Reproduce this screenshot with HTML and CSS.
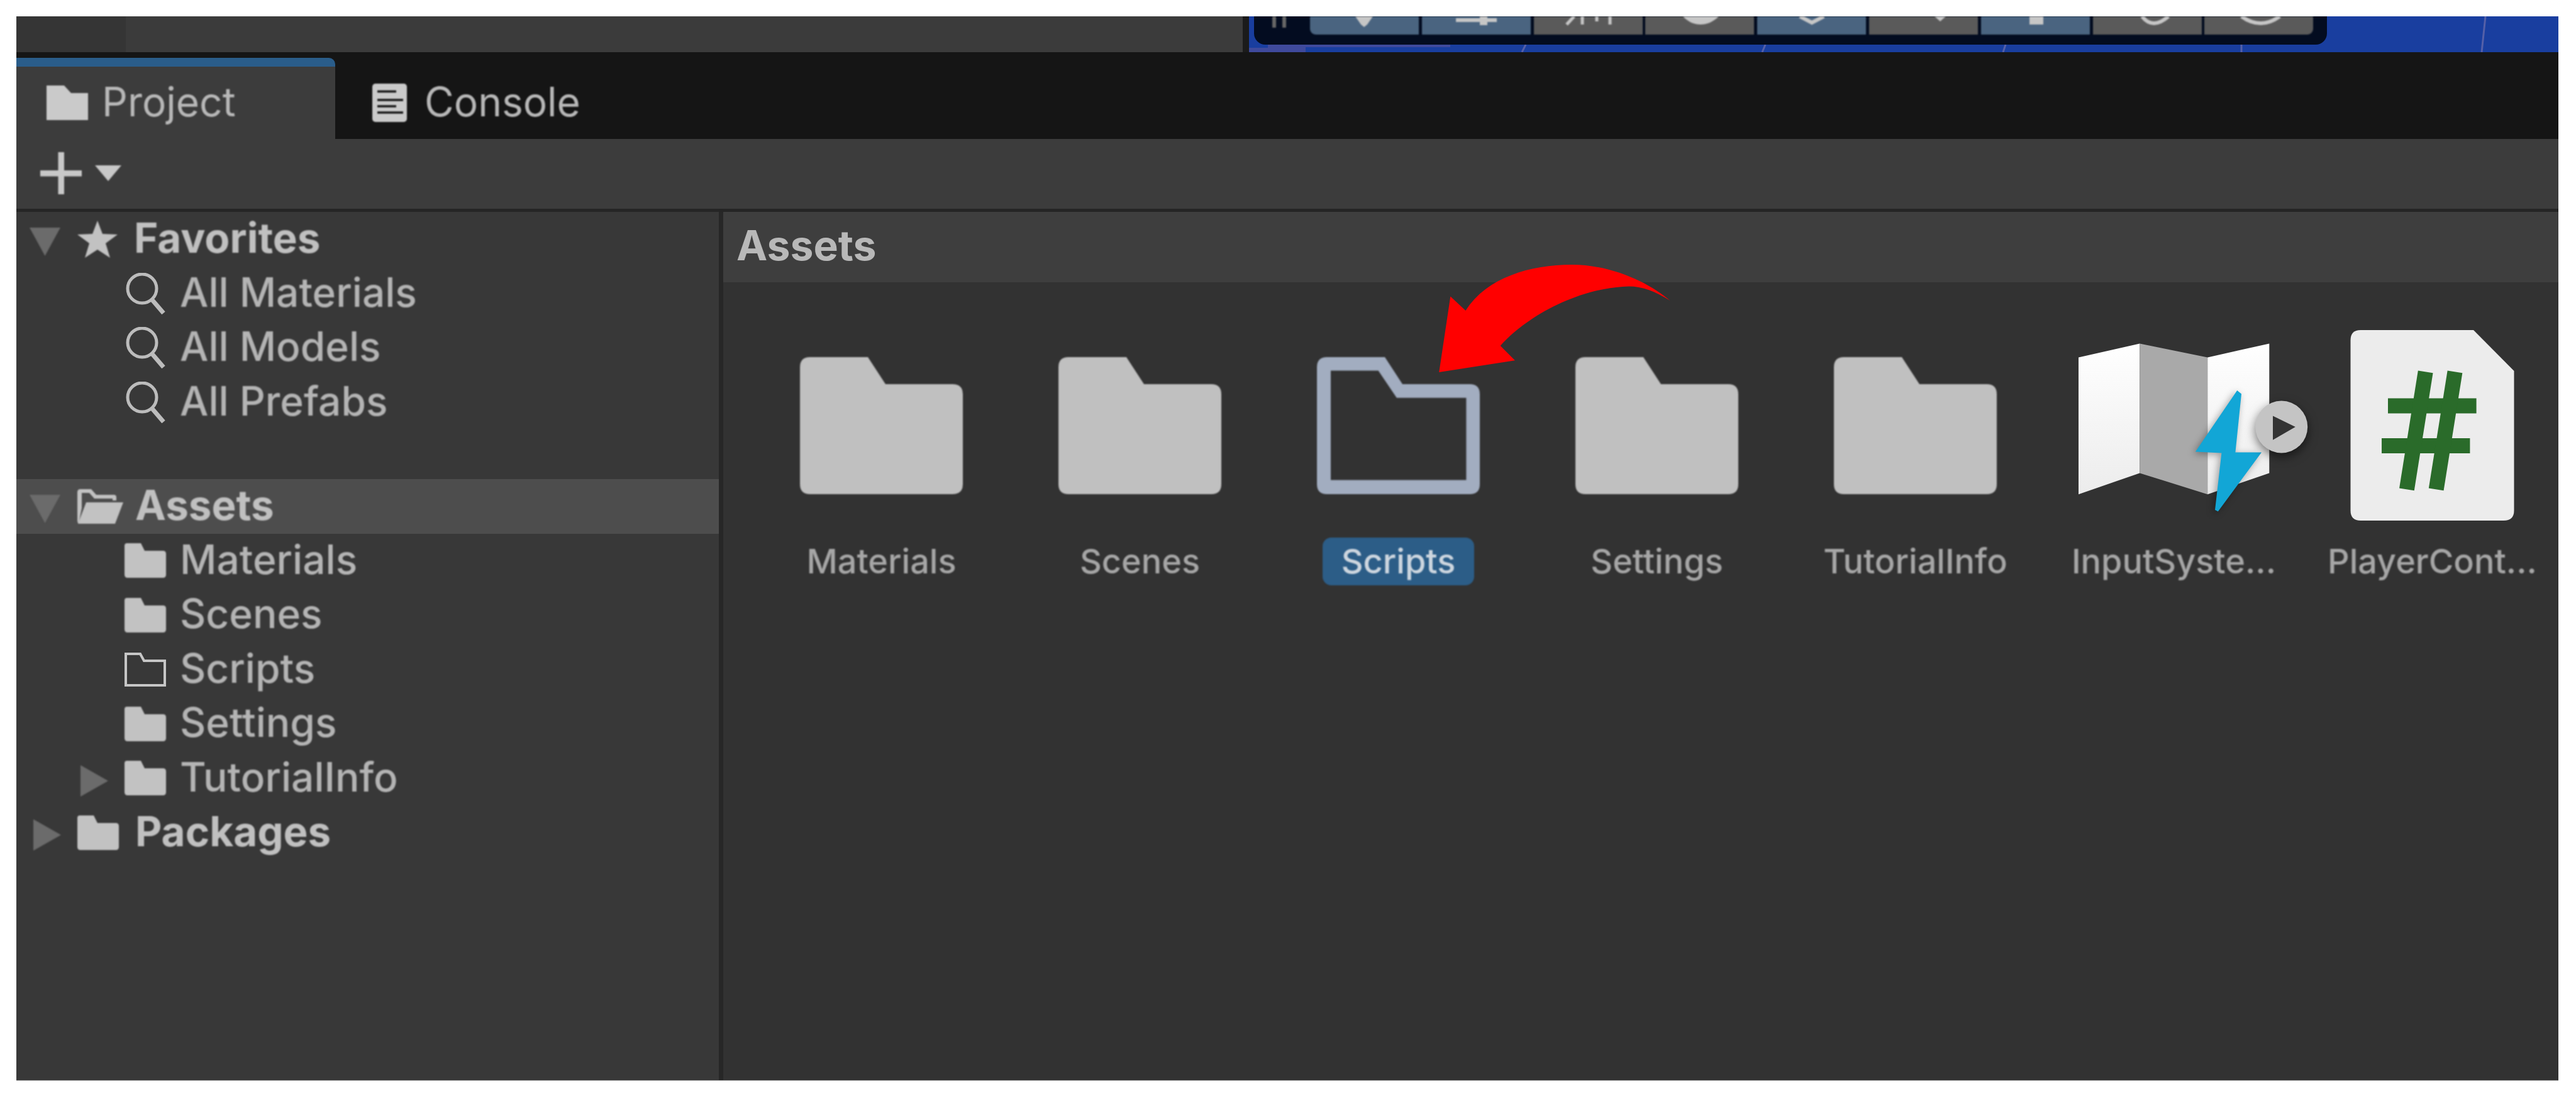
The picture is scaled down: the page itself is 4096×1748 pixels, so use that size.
FILE: index.html
```html
<!DOCTYPE html>
<html lang="en">
<head>
<meta charset="utf-8">
<title>Project</title>
<link rel="stylesheet" href="styles.css">
</head>
<body>
<svg class="defs" aria-hidden="true">
  <symbol id="folder-small" viewBox="0 0 66 55"><path d="M4 0H26L32 12H61Q66 12 66 17V50Q66 55 61 55H5Q0 55 0 50V4Q0 0 4 0Z"/></symbol>
  <symbol id="folder-large" viewBox="0 0 303 303"><path d="M38 43H130L158 86H265Q281 86 281 102V245Q281 261 265 261H38Q22 261 22 245V59Q22 43 38 43Z"/></symbol>
</svg>
<main class="window">
  <div class="strip">
    <div class="strip-dark"></div>
    <div class="strip-mid"></div>
    <div class="strip-rule"></div>
    <div class="scene">
      <svg class="scene-marks" viewBox="0 0 2082 57" width="2082" height="57">
        <path class="mark-band" d="M30 44H320V49H90V57H0V50H30Z"/>
        <path class="mark" d="M434 57L440 45M816 57L821 45M1199 57L1203 45M1578 57L1578 45M1960 57L1966 0"/>
      </svg>
      <div class="overlay">
        <div class="pause"><span class="pause-bar"></span><span class="pause-bar"></span></div>
        <div class="tool blue"><svg viewBox="0 0 173 29" width="173" height="29"><path class="glyph" d="M72 0H100L91 13L86 17L81 13Z"/></svg></div>
        <div class="tool blue"><svg viewBox="0 0 173 29" width="173" height="29"><path class="glyph" d="M54 3H92V0H104V3H119V9H104V14H92V9H54Z"/></svg></div>
        <div class="tool gray"><svg viewBox="0 0 173 29" width="173" height="29"><path class="line thin" d="M64 0L52 13M77 0V13M100 0V8M121 0V13"/></svg></div>
        <div class="tool gray"><svg viewBox="0 0 173 29" width="173" height="29"><path class="glyph" d="M60 0H117C108 9 98 13 88 13C78 13 68 9 60 0Z"/></svg></div>
        <div class="tool blue"><svg viewBox="0 0 173 29" width="173" height="29"><path class="line" d="M68 0L87 10L106 0"/></svg></div>
        <div class="tool gray"><svg viewBox="0 0 173 29" width="173" height="29"><path class="glyph" d="M104 0H122L113 8Z"/></svg></div>
        <div class="tool blue"><svg viewBox="0 0 173 29" width="173" height="29"><path class="glyph" d="M77 0H99V13H77Z"/></svg></div>
        <div class="tool gray"><svg viewBox="0 0 173 29" width="173" height="29"><path class="line" d="M78 0C84 8 90 11 97 11C104 11 112 7 120 0"/></svg></div>
        <div class="tool gray"><svg viewBox="0 0 173 29" width="173" height="29"><path class="line" d="M59 0C70 8 80 11 90 11C100 11 110 7 120 0"/></svg></div>
      </div>
    </div>
  </div>

  <div class="tabbar">
    <div class="tab active">
      <svg class="tab-icon" viewBox="0 0 66 55" width="66" height="55"><path d="M0 0H28L39 12H66V55H0Z"/></svg>
      <span class="tab-label">Project</span>
    </div>
    <div class="tab">
      <svg class="tab-icon" viewBox="0 0 55 61" width="55" height="61">
        <rect width="55" height="61" rx="5"/>
        <path class="console-lines" d="M8 12.5H38M8 26H49M8 36H38M8 46H49"/>
      </svg>
      <span class="tab-label">Console</span>
    </div>
  </div>

  <div class="toolbar">
    <svg class="soft" viewBox="0 0 66 67" width="66" height="67"><path class="add" d="M28.500 0H38V29H66V38.500H38V67H28.500V38.500H0V29H28.500Z"/></svg>
    <svg class="soft" viewBox="0 0 42 25" width="42" height="25"><path class="add" d="M0 0H42L21 25Z"/></svg>
  </div>

  <div class="panes">
    <nav class="tree">
      <div class="row top">
        <span class="slot"><svg class="arrow-down" viewBox="0 0 49 45" width="49" height="45"><path d="M0 0H49L24.5 45Z"/></svg></span>
        <svg class="tree-icon" viewBox="0 0 64 59" width="64" height="59"><path d="M32 0L40 21L64 22L45 36L52 59L32 46L12 59L19 36L0 22L24 21Z"/></svg>
        <span class="row-label strong">Favorites</span>
      </div>
      <div class="row child">
        <span class="slot"></span>
        <svg class="search-icon" viewBox="0 0 67 66" width="67" height="66"><circle cx="28" cy="25" r="23"/><path d="M44 43L62 64"/></svg>
        <span class="row-label">All Materials</span>
      </div>
      <div class="row child">
        <span class="slot"></span>
        <svg class="search-icon" viewBox="0 0 67 66" width="67" height="66"><circle cx="28" cy="25" r="23"/><path d="M44 43L62 64"/></svg>
        <span class="row-label">All Models</span>
      </div>
      <div class="row child">
        <span class="slot"></span>
        <svg class="search-icon" viewBox="0 0 67 66" width="67" height="66"><circle cx="28" cy="25" r="23"/><path d="M44 43L62 64"/></svg>
        <span class="row-label">All Prefabs</span>
      </div>
      <div class="tree-gap"></div>
      <div class="row top current">
        <span class="slot"><svg class="arrow-down" viewBox="0 0 49 45" width="49" height="45"><path d="M0 0H49L24.5 45Z"/></svg></span>
        <svg class="tree-icon" viewBox="0 0 73 55" width="73" height="55"><path d="M5 0H22L30 9H58Q62 9 62 13V18H56V15H27L19 6H7V30L2 55H4Q0 55 0 50V5Q0 0 5 0Z"/><path d="M14 21H73L60 55H1Z"/></svg>
        <span class="row-label strong">Assets</span>
      </div>
      <div class="row child">
        <span class="slot"></span>
        <svg class="tree-icon" width="66" height="55"><use href="#folder-small"/></svg>
        <span class="row-label">Materials</span>
      </div>
      <div class="row child">
        <span class="slot"></span>
        <svg class="tree-icon" width="66" height="55"><use href="#folder-small"/></svg>
        <span class="row-label">Scenes</span>
      </div>
      <div class="row child">
        <span class="slot"></span>
        <svg class="tree-outline" viewBox="0 0 66 55" width="66" height="55"><path d="M2 3H25L31 14H64V53H2Z"/></svg>
        <span class="row-label">Scripts</span>
      </div>
      <div class="row child">
        <span class="slot"></span>
        <svg class="tree-icon" width="66" height="55"><use href="#folder-small"/></svg>
        <span class="row-label">Settings</span>
      </div>
      <div class="row child">
        <span class="slot"><svg class="arrow-right" viewBox="0 0 44 50" width="44" height="50"><path d="M0 0L44 25L0 50Z"/></svg></span>
        <svg class="tree-icon" width="66" height="55"><use href="#folder-small"/></svg>
        <span class="row-label">TutorialInfo</span>
      </div>
      <div class="row top narrow">
        <span class="slot"><svg class="arrow-right" viewBox="0 0 44 50" width="44" height="50"><path d="M0 0L44 25L0 50Z"/></svg></span>
        <svg class="tree-icon" width="66" height="55"><use href="#folder-small"/></svg>
        <span class="row-label strong">Packages</span>
      </div>
    </nav>

    <section class="browser">
      <header class="crumb">Assets</header>
      <div class="grid">
        <figure class="asset">
          <svg class="folder" width="303" height="303"><use href="#folder-large"/></svg>
          <figcaption class="asset-label">Materials</figcaption>
        </figure>
        <figure class="asset">
          <svg class="folder" width="303" height="303"><use href="#folder-large"/></svg>
          <figcaption class="asset-label">Scenes</figcaption>
        </figure>
        <figure class="asset">
          <svg class="folder-open" viewBox="0 0 303 303" width="303" height="303"><path fill-rule="evenodd" d="M38 43H130L158 86H265Q281 86 281 102V245Q281 261 265 261H38Q22 261 22 245V59Q22 43 38 43ZM44 64.5V238.6H259.4V107.8H148.8L119.6 64.5Z"/></svg>
          <figcaption class="asset-label selected">Scripts</figcaption>
        </figure>
        <figure class="asset">
          <svg class="folder" width="303" height="303"><use href="#folder-large"/></svg>
          <figcaption class="asset-label">Settings</figcaption>
        </figure>
        <figure class="asset">
          <svg class="folder" width="303" height="303"><use href="#folder-large"/></svg>
          <figcaption class="asset-label">TutorialInfo</figcaption>
        </figure>
        <figure class="asset">
          <svg class="map" viewBox="0 0 303 303" width="303" height="303">
            <defs><linearGradient id="paper" x1="0" y1="0" x2="0" y2="1"><stop offset="0" stop-color="#ffffff"/><stop offset="1" stop-color="#ececec"/></linearGradient></defs>
            <path fill="url(#paper)" d="M0 43.4L97.3 21.5V227.4L0 261.3Z"/>
            <path fill="#a9a9a9" d="M97.3 21.5L205.2 43.4V261.3L97.3 227.4Z"/>
            <path fill="url(#paper)" d="M205.2 43.4L303.3 21.5V227.4L205.2 261.3Z"/>
            <path class="bolt" d="M252.2 96L259 101.5L249.4 194.5H291L221.8 288.5L217 286L227.4 195.5L185.8 193.5Z"/>
            <circle class="play-ring" cx="322.7" cy="154" r="41.5"/>
            <path class="play-tip" d="M309 136.5L344.8 154L309 174.8Z"/>
          </svg>
          <figcaption class="asset-label">InputSyste...</figcaption>
        </figure>
        <figure class="asset">
          <svg class="script" viewBox="0 0 303 303" width="303" height="303">
            <path class="script-page" d="M37.5 0H217L281.5 65V287Q281.5 303 265 303H37.5Q21.5 303 21.5 287V16Q21.5 0 37.5 0Z"/>
            <path class="script-hash" d="M81 120.5H221.6"/>
            <path class="script-hash" d="M71 184H211.4"/>
            <path class="script-hash" d="M140.7 66.4L110.9 253.4"/>
            <path class="script-hash" d="M187.5 66.4L157.7 253.4"/>
          </svg>
          <figcaption class="asset-label">PlayerCont...</figcaption>
        </figure>
      </div>
      <svg class="pointer" viewBox="0 0 375 175" width="375" height="175"><path d="M4.2 171L22.3 50.5L46.4 73C80 20 150 0 215 0C280 0 340 30 371.4 57C345 40 320 32 296 35C220 40 140 85 101.7 129L124.9 152.3Z"/></svg>
    </section>
  </div>
</main>
</body>
</html>
```
FILE: styles.css
```css
* { box-sizing: border-box; }
html, body { margin: 0; height: 100%; background: #ffffff; }
body { padding: 26px 28px 29px 26px; font-family: Inter, "Liberation Sans", sans-serif; overflow: hidden; }
.defs { display: none; }

.window { height: 100%; display: flex; flex-direction: column; background: #333; border-bottom: 1px solid #9a9a9a; }

/* cropped scene view along the top edge */
.strip { flex: 0 0 57px; display: flex; background: #3b3b3b; }
.strip-dark { flex: 0 0 174px; background: #353535; }
.strip-mid { flex: 0 0 1776px; background: #3b3b3b; }
.strip-rule { flex: 0 0 10px; background: #1b1b1b; }
.scene { flex: 1; position: relative; background: #193e9f; overflow: hidden; }
.scene-marks { position: absolute; left: 0; top: 0; }
.mark { fill: none; stroke: #5560a8; stroke-width: 3; }
.mark-band { fill: #3f4a9c; }
.overlay { position: relative; margin-left: 8px; width: 1706px; height: 44.5px; background: #030c20; border-radius: 0 0 18px 18px; display: flex; align-items: flex-start; gap: 4.8px; }
.pause { flex: 0 0 84.2px; display: flex; gap: 10px; padding-left: 29px; }
.pause-bar { width: 6px; height: 18px; background: #666; filter: blur(.8px); }
.tool { flex: 0 0 173px; height: 28.6px; overflow: hidden; display: flex; filter: blur(1px); }
.tool.blue { background: #4a6480; }
.tool.gray { background: #5a5a5a; }
.tool:nth-child(2) { border-bottom-left-radius: 9px; }
.tool:last-child { border-bottom-right-radius: 9px; }
.glyph { fill: #c6c6c6; }
.line { fill: none; stroke: #c6c6c6; stroke-width: 6; }
.line.thin { stroke-width: 5; }

/* tabs */
.tabbar { flex: 0 0 138px; display: flex; align-items: flex-end; background: #151515; }
.tab { display: flex; align-items: center; height: 115px; color: #b8b8b8; font-size: 64px; padding-left: 59px; gap: 28px; }
.tab.active { flex: 0 0 507px; height: 129px; padding: 0 0 0 48px; gap: 22px; background: #3c3c3c; border-top: 14px solid #2a5d8a; border-top-right-radius: 10px; }
.tab-icon { fill: #cacaca; flex: none; filter: blur(.8px); }
.console-lines { fill: none; stroke: #151515; stroke-width: 3.6; }
.tab-label { margin-bottom: 4px; filter: blur(1.1px); }

.toolbar { flex: 0 0 116px; display: flex; align-items: center; gap: 21px; padding: 0 0 3px 38px; background: #3c3c3c; border-bottom: 5px solid #252525; }
.soft { filter: blur(.8px); }
.add { fill: #c8c8c8; }

/* panes */
.panes { flex: 1; display: flex; min-height: 0; }
.tree { flex: 0 0 1124px; background: #383838; border-right: 7px solid #272727; color: #b4b4b4; font-size: 64px; }
.tree-gap { height: 79px; }
.row { height: 86.5px; display: flex; align-items: center; }
.row.top { padding-left: 21px; }
.row.child { padding-left: 102px; }
.row.narrow { padding-left: 27px; }
.row.current { background: #4d4d4d; }
.slot { flex: 0 0 76px; display: flex; align-items: center; }
.row.child .slot { flex-basis: 70px; }
.row.narrow .slot { flex-basis: 70px; }
.row.top .tree-icon { margin-right: 26px; }
.row.current .tree-icon { margin-right: 19px; }
.row.child .tree-icon, .row.child .tree-outline { margin-right: 22px; }
.row.child .search-icon { margin-right: 21px; }
.arrow-down, .arrow-right { fill: #6b6b6b; margin-top: 8px; filter: blur(.8px); }
.tree-icon { fill: #c2c2c2; flex: none; filter: blur(.8px); }
.tree-outline { fill: none; stroke: #c6c6c6; stroke-width: 4; flex: none; filter: blur(.6px); }
.search-icon { fill: none; stroke: #bcbcbc; stroke-width: 5; flex: none; filter: blur(.6px); }
.search-icon path { stroke-width: 7; }
.row-label { margin-bottom: 4px; line-height: 1; font-weight: 500; filter: blur(1.1px); }
.strong { font-weight: 700; font-size: 65.5px; color: #c0c0c0; }

.browser { flex: 1; position: relative; min-width: 0; background: #323232; }
.crumb { height: 112px; padding: 0 0 7px 21px; display: flex; align-items: center; background: #3e3e3e; color: #b8b8b8; font-size: 66px; font-weight: 700; }
.grid { display: flex; padding: 76px 0 0 46px; }
.asset { flex: 0 0 411px; margin: 0; display: flex; flex-direction: column; align-items: center; }
.folder { fill: #c0c0c0; filter: blur(.8px); }
.folder-open { fill: #a2adc0; filter: blur(.8px); }
.map { overflow: visible; filter: blur(.7px); }
.bolt { fill: #12a6d6; filter: drop-shadow(-3px 3px 6px rgba(0,0,0,.35)); }
.play-ring { fill: #c4c4c4; filter: drop-shadow(0 6px 8px rgba(0,0,0,.55)); }
.play-tip { fill: #333; }
.script-page { fill: #ececec; }
.script-hash { fill: none; stroke: #2a6b2a; stroke-width: 24; }
.script { filter: blur(.7px); }
.asset-label { margin-top: 27px; height: 76px; padding: 0 30px 2px; display: flex; align-items: center; border-radius: 14px; color: #a6a6a6; font-size: 54px; font-weight: 500; white-space: nowrap; filter: blur(.9px); }
.asset-label.selected { background: #2c5d87; color: #cdd6df; }
.pointer { position: absolute; left: 1134px; top: 84px; fill: #ff0000; }
```
